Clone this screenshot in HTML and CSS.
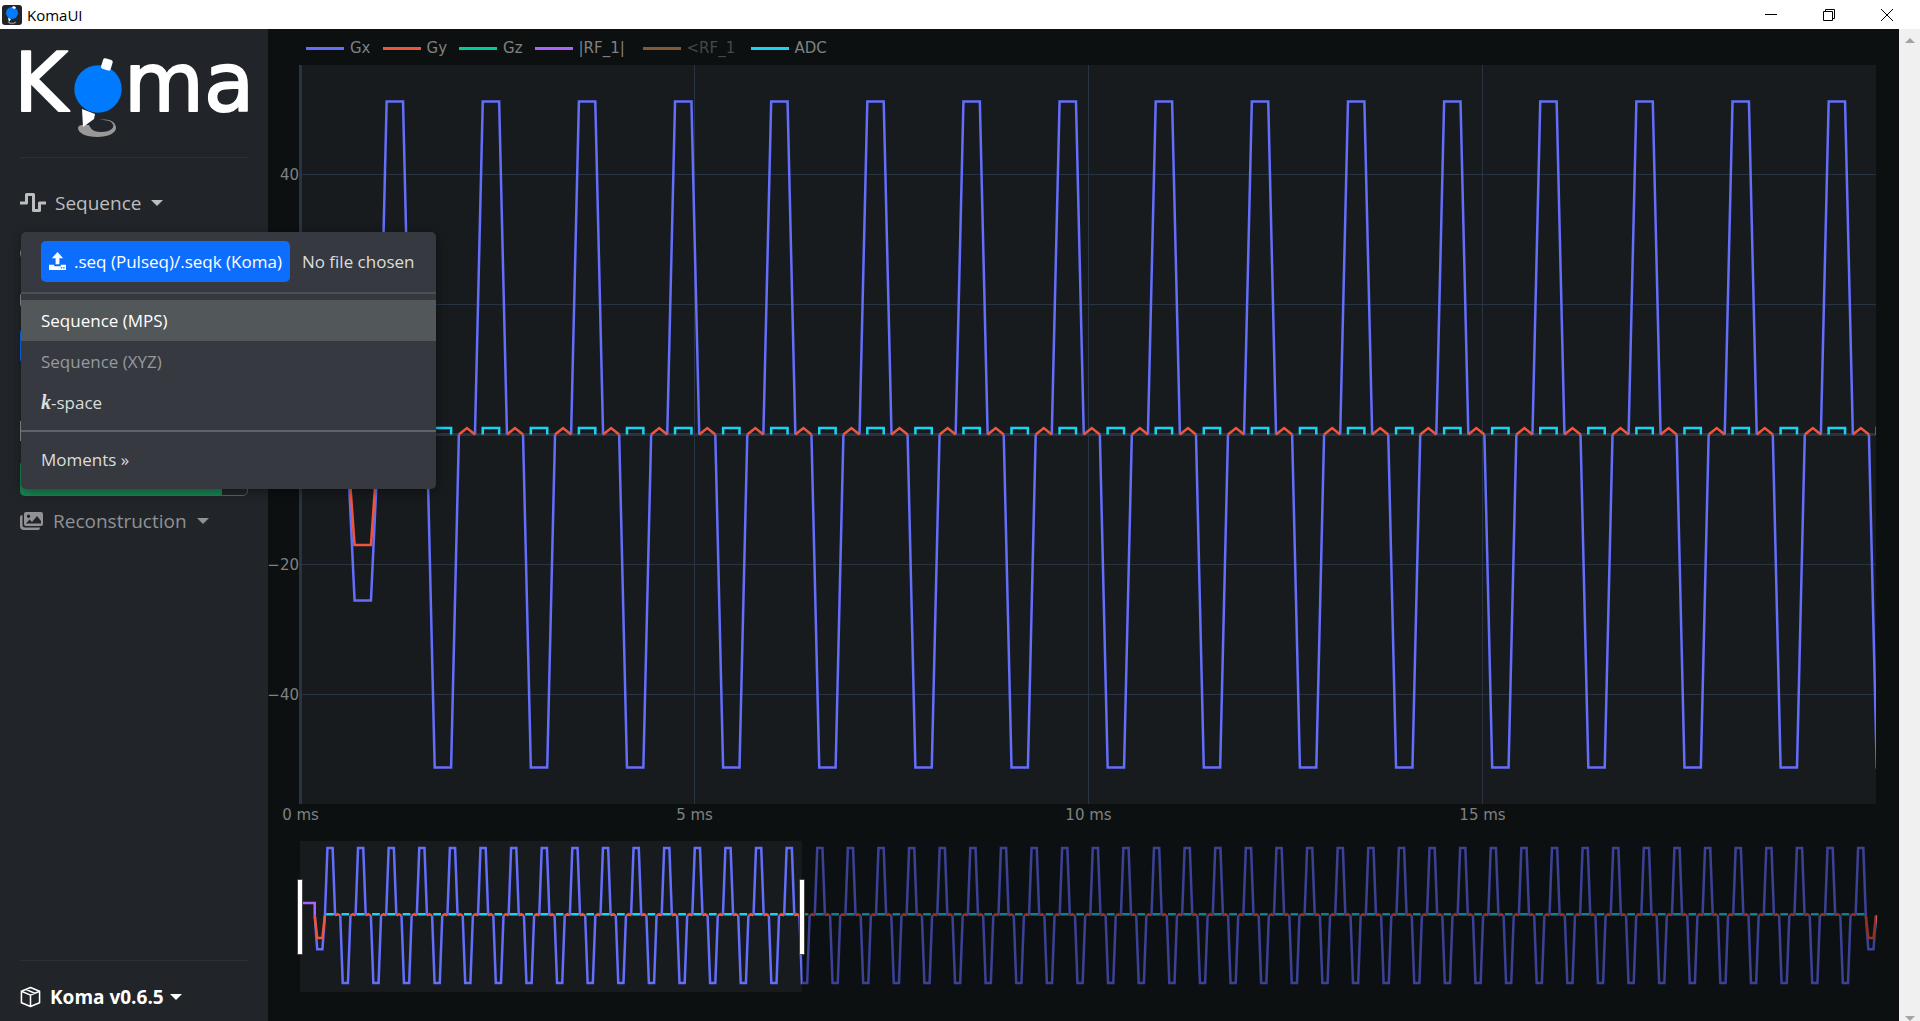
FILE: index.html
```html
<!DOCTYPE html>
<html lang="en">
<head>
<meta charset="utf-8">
<title>KomaUI</title>
<link rel="stylesheet" href="styles.css">
</head>
<body>
<header class="titlebar">
  <svg class="app-icon" viewBox="0 0 20 20" aria-hidden="true">
    <rect width="20" height="20" rx="3" fill="#212529"/>
    <circle cx="10" cy="8" r="6" fill="#007bff"/>
    <path d="M11 1l3 1-1 2-3-1zM6 13l3 1-2 3z" fill="#fff"/>
    <path d="M6 17q4 3 8 0" fill="none" stroke="#888" stroke-width="1.5"/>
  </svg>
  <span class="app-name">KomaUI</span>
  <div class="window-buttons">
    <button aria-label="Minimize"><svg viewBox="0 0 12 12"><path d="M0 5.500h12"/></svg></button>
    <button aria-label="Restore"><svg viewBox="0 0 12 12"><path d="M.5 2.500h9v9h-9zM2.500 2.500v-2h9v9h-2"/></svg></button>
    <button aria-label="Close"><svg viewBox="0 0 12 12"><path d="M0 0l12 12M12 0L0 12"/></svg></button>
  </div>
</header>
<div class="app">
  <aside class="sidebar">
    <svg class="logo" viewBox="0 0 228 108" role="img" aria-label="Koma">
      <g class="logo-text"><text x="-6" y="62">K</text><text x="104" y="62">ma</text></g>
      <path fill="#999" d="M58 79c0-3 5-4 11-3 2 4 4 7 12 7 10 0 15-5 11-9-2-3-7-3-13-3 9-2 17 1 17 8 0 5-8 9-19 9s-19-4-19-9z"/>
      <path fill="#fff" d="M62 60l13 5-1 5-11 8z"/>
      <circle cx="78" cy="40" r="23.700" fill="#007bff"/>
      <rect x="82" y="10" width="10" height="11" rx="2" fill="#fff" transform="rotate(17 87 15)"/>
    </svg>
    <hr>
    <nav class="nav">
      <button class="nav-link nav-open" aria-expanded="true">
        <svg class="nav-icon" viewBox="0 0 26 20" fill="none" stroke="currentColor" stroke-width="3" stroke-linejoin="round"><path d="M0 10h6.500V1.500h7v16h6V10H26"/></svg>
        <span>Sequence</span><i class="caret"></i>
      </button>
      <div class="nav-link"><svg class="nav-icon" viewBox="0 0 26 20" fill="currentColor"><circle cx="10" cy="10" r="10"/></svg></div>
      <div class="nav-link nav-short"><svg class="nav-icon" viewBox="0 0 26 20" fill="none" stroke="currentColor" stroke-width="2"><rect x="1" y="5" width="20" height="12" rx="2"/></svg></div>
      <button class="action action-blue" aria-label="Simulate"></button>
      <div class="nav-link nav-raw"><svg class="nav-icon" viewBox="0 0 26 20" fill="none" stroke="currentColor" stroke-width="2"><rect x="1" y="1" width="20" height="18"/></svg></div>
      <div class="action-group"><button class="action action-green" aria-label="Reconstruct"></button><button class="action action-outline" aria-label="Reconstruction options"></button></div>
      <button class="nav-link">
        <svg class="nav-icon icon-images" viewBox="0 0 24 20"><path fill="currentColor" fill-rule="evenodd" d="M6 1h15q2 0 2 2v10q0 2-2 2H6q-2 0-2-2V3q0-2 2-2zm0 2.500v9h15V10l-4-5-5 6-2.500-2.500L6.500 12H6zM8.500 3.500a1.700 1.700 0 1 0 .1 0z"/><path fill="currentColor" d="M0 6q0-2 2.500-2v10q0 2.500 2.500 2.500h15q0 2.500-2 2.500H4q-4 0-4-4z"/></svg>
        <span>Reconstruction</span><i class="caret"></i>
      </button>
    </nav>
    <hr class="foot-rule">
    <button class="version">
      <svg viewBox="0 0 22 22" fill="none" stroke="currentColor" stroke-width="1.600" stroke-linejoin="round"><path d="M11 1l9.500 4v12L11 21l-9.500-4V5zM1.500 5l9.500 4 9.500-4M11 9v12M6 3l9.500 4"/></svg>
      <span>Koma v0.6.5</span><i class="caret"></i>
    </button>
    <div class="menu">
      <div class="file-row">
        <label class="file-button" for="seq-file"><svg viewBox="0 0 18 20" fill="currentColor"><path d="M9 0l6 6.500h-4V13H7V6.500H3zM0 13.500h5.500V15h7v-1.500H18V19H0zM12.500 16v1.500H14V16zm2.500 0v1.500h1.500V16z" fill-rule="evenodd"/></svg>.seq (Pulseq)/.seqk (Koma)</label>
        <input id="seq-file" class="file-input" type="file">
        <span>No file chosen</span>
      </div>
      <a class="menu-item active" href="#mps">Sequence (MPS)</a>
      <a class="menu-item muted" href="#xyz">Sequence (XYZ)</a>
      <a class="menu-item" href="#kspace"><em>k</em>-space</a>
      <div class="menu-rule"></div>
      <a class="menu-item" href="#moments">Moments »</a>
    </div>
  </aside>
  <main class="figure">
    <ul class="legend">
      <li><i class="key gx"></i>Gx</li>
      <li><i class="key gy"></i>Gy</li>
      <li><i class="key gz"></i>Gz</li>
      <li class="wide"><i class="key rf"></i>|RF_1|</li>
      <li class="wide off"><i class="key phase"></i>&lt;RF_1</li>
      <li><i class="key adc"></i>ADC</li>
    </ul>
    <div class="plot"><svg id="plot" role="img" aria-label="Sequence waveforms"></svg></div>
  </main>
  <div class="scrollbar"><i class="arrow-up"></i><i class="arrow-down"></i></div>
</div>
<script src="plot.js"></script>
</body>
</html>
```
FILE: styles.css
```css
* { box-sizing: border-box; }
body {
  margin: 0;
  height: 100vh;
  display: flex;
  flex-direction: column;
  overflow: hidden;
  background: #0c1010;
  font-family: "Open Sans", "Noto Sans", sans-serif;
}
button { background: none; border: 0; padding: 0; margin: 0; font: inherit; color: inherit; text-align: left; }

.titlebar { height: 29px; flex: none; display: flex; align-items: center; padding-left: 2px; background: #fff; color: #000; font-size: 15px; }
.app-icon { width: 20px; height: 20px; margin-right: 5px; }
.window-buttons { margin-left: auto; display: flex; }
.window-buttons button { width: 58px; height: 28px; display: flex; align-items: center; justify-content: center; }
.window-buttons svg { width: 12px; height: 12px; fill: none; stroke: #000; stroke-width: 1; overflow: visible; }
.window-buttons button:last-child { margin-right: 4px; }

.app { flex: 1; display: flex; min-height: 0; }
.sidebar { position: relative; width: 268px; flex: none; display: flex; flex-direction: column; padding: 20px 20px 0; background: #212529; color: #909293; }
.logo { display: block; width: 100%; height: 108px; flex: none; overflow: visible; }
.logo-text { font: 82px "DejaVu Sans", sans-serif; fill: #fff; stroke: #fff; stroke-width: 2; stroke-linejoin: round; }
hr { width: 100%; height: 1px; margin: 0 0 20px; border: 0; background: #2d3135; flex: none; }

.nav { display: flex; flex-direction: column; font-size: 19px; }
.nav-link { height: 50px; display: flex; align-items: center; }
.nav-link span { margin-left: 9px; }
.nav-open { color: #bcbdbe; }
.nav-icon { width: 26px; height: 20px; }
.icon-images { width: 24px; }
.nav-short { height: 42px; }
.nav-raw { margin-top: 42px; }
.caret { border: 6px solid transparent; border-top-color: currentColor; border-bottom: 0; margin-left: 10px; }
.action { height: 36px; }
.action-blue { margin-top: 8px; background: #0d6efd; border-radius: 5px; }
.action-group { display: flex; margin: 4px 0 0; }
.action-green { flex: 1; background: #198754; border-radius: 5px 0 0 5px; }
.action-outline { width: 27px; border: 1px solid #198754; border-radius: 0 5px 5px 0; }

.foot-rule { margin: auto 0 12px; }
.version { display: flex; align-items: center; height: 48px; flex: none; color: #fff; font-size: 19px; font-weight: 700; }
.version svg { width: 21px; height: 22px; margin-right: 9px; }
.version .caret { margin-left: 6px; }

.menu { position: absolute; left: 21px; top: 203px; width: 415px; height: 257px; z-index: 2; background: #363940; border-radius: 5px; box-shadow: 0 3px 12px rgba(0, 0, 0, .4); color: #dcddde; font-size: 17px; }
.file-row { display: flex; align-items: center; height: 62px; padding: 9px 20px 10px; margin-bottom: 6px; white-space: nowrap; border-bottom: 2px solid #4b4f55; }
.file-button { display: flex; flex: none; align-items: center; height: 41px; padding: 0 8px; margin-right: 12px; border-radius: 5px; background: #0d6efd; color: #fff; }
.file-button svg { width: 17px; height: 19px; margin-right: 8px; }
.file-input { position: absolute; width: 1px; height: 1px; opacity: 0; }
.menu-item { display: flex; align-items: center; height: 41px; padding: 0 20px; color: inherit; text-decoration: none; }
.menu-item em { font: italic bold 20px "Liberation Serif", serif; }
.active { background: #52575a; color: #fff; }
.muted { color: #959a9f; }
.menu-rule { height: 2px; margin: 7px 0; background: #5f6268; }

.figure { flex: 1; min-width: 0; display: flex; flex-direction: column; background: #0c1010; color: #7f8182; font: 15px "DejaVu Sans", sans-serif; }
.legend { display: flex; align-items: center; gap: 12px; height: 36px; flex: none; margin: 0; padding: 2px 0 0 38px; list-style: none; }
.legend li { display: flex; align-items: center; white-space: nowrap; }
.legend .wide { min-width: 96px; }
.key { width: 38px; height: 3px; margin-right: 6px; }
.gx { background: #636efa; }
.gy { background: #ef553b; }
.gz { background: #00cc96; }
.rf { background: #ab63fa; }
.phase { background: #ffa15a; }
.adc { background: #19d3f3; }
.off { opacity: .5; }

.plot { flex: 1; min-height: 0; overflow: hidden; }
.plot svg { display: block; width: 100%; height: 100%; }
.plot text { fill: #7f8182; }
.panel { fill: #171b1e; }
.grid { stroke: #283442; stroke-width: 1; }
.zero { stroke: #283442; stroke-width: 3; }
.trace { fill: none; stroke-width: 2.5; }
.trace-gx { stroke: #636efa; }
.trace-gy { stroke: #ef553b; }
.trace-rf { stroke: #ab63fa; }
.trace-adc { stroke: #19d3f3; }
.shade { fill: #000; opacity: .4; }
.handle { fill: #fff; stroke: #444; }

.scrollbar { width: 21px; flex: none; display: flex; flex-direction: column; align-items: center; justify-content: space-between; padding-top: 9px; background: #f0f0f0; }
.arrow-up, .arrow-down { border: 5px solid transparent; }
.arrow-up { border-top: 0; border-bottom-color: #a3a3a3; }
.arrow-down { border-bottom: 0; border-top-color: #a3a3a3; }
```
FILE: plot.js
```js
const svg = document.getElementById("plot");

// Times in ms, gradients in mT/m.
const RAMP = 0.099, FLAT = 0.208, BLIP = 0.204, PREP = 0.587, PREP_END = 0.994;
const PULSE = 2 * RAMP + FLAT, STEP = PULSE + BLIP, LINES = 101, PEAK = 51.2;
const START = PREP_END, TOTAL = START + (LINES - 1) * STEP + 2 * PULSE;

function trapezoid(t, length, value) {
  return [[t, 0], [t + RAMP, value], [t + length - RAMP, value], [t + length, 0]];
}

// Each waveform is a list of separate polylines.
const gx = [];
const gy = [trapezoid(PREP, PULSE, -17)];
const adc = [];
gx.push(trapezoid(PREP, PULSE, -25.5));
for (let i = 0; i < LINES; i++) {
  const t = START + i * STEP;
  gx.push(trapezoid(t, PULSE, i % 2 ? -PEAK : PEAK));
  adc.push([[t + RAMP, 0], [t + RAMP, 1], [t + RAMP + FLAT, 1], [t + RAMP + FLAT, 0]]);
  if (i < LINES - 1) gy.push([[t + PULSE, 0], [t + PULSE + BLIP / 2, 1], [t + STEP, 0]]);
}
gx.push(trapezoid(TOTAL - PULSE, PULSE, -25.5));
gy.push(trapezoid(TOTAL - PULSE, PULSE, -17));
const rf = [[[0, 0], [0, 9.4], [PREP, 9.4], [PREP, 0]]];

function traces(x, y) {
  const path = pts => "M" + pts.map(p => x(p[0]).toFixed(2) + " " + y(p[1]).toFixed(2)).join("L");
  const line = (name, parts) => `<path class="trace trace-${name}" d="${parts.map(path).join("")}"/>`;
  return line("gx", gx) + line("gy", gy) + line("rf", rf) + line("adc", adc);
}

function draw() {
  const width = svg.clientWidth, height = svg.clientHeight;
  const left = 32, right = width - 23, w = right - left;
  const bottom = height - 217, zeroY = bottom / 2;
  const x = t => left + 0.5 + t / 20 * w;
  const y = v => zeroY - v * bottom / 113.6;
  let out = `<clipPath id="clip"><rect x="${left}" width="${w}" height="${bottom}"/></clipPath>`;
  out += `<rect class="panel" x="${left}" width="${w}" height="${bottom}"/>`;
  for (const t of [0, 5, 10, 15]) {
    const px = Math.floor(x(t)) + 0.5;
    out += `<path class="${t ? "grid" : "zero"}" d="M${px} 0V${bottom}"/>`;
    out += `<text x="${px}" y="${bottom + 16}" text-anchor="middle">${t} ms</text>`;
  }
  for (const v of [-40, -20, 0, 20, 40]) {
    const py = Math.floor(y(v)) + 0.5;
    out += `<path class="${v ? "grid" : "zero"}" d="M${left} ${py}H${right}"/>`;
    out += `<text x="${left - 1}" y="${py + 5}" text-anchor="end">${String(v).replace("-", "−")}</text>`;
  }
  out += `<g clip-path="url(#clip)">${traces(x, y)}</g>`;

  // Range slider below the plot.
  const top = bottom + 37, sh = 151, mid = top + sh / 2 - 1;
  const sx = t => left + t / TOTAL * w;
  const end = sx(20);
  out += `<rect class="panel" x="${left}" y="${top}" width="${w}" height="${sh}"/>`;
  out += traces(sx, v => mid - v * 1.32);
  out += `<rect class="shade" x="${end}" y="${top}" width="${right - end}" height="${sh}"/>`;
  for (const hx of [left, end]) {
    out += `<rect class="handle" x="${Math.round(hx) - 2.5}" y="${mid - 36}" width="5" height="75" rx="1"/>`;
  }
  svg.innerHTML = out;
}
draw();
addEventListener("resize", draw);
```
